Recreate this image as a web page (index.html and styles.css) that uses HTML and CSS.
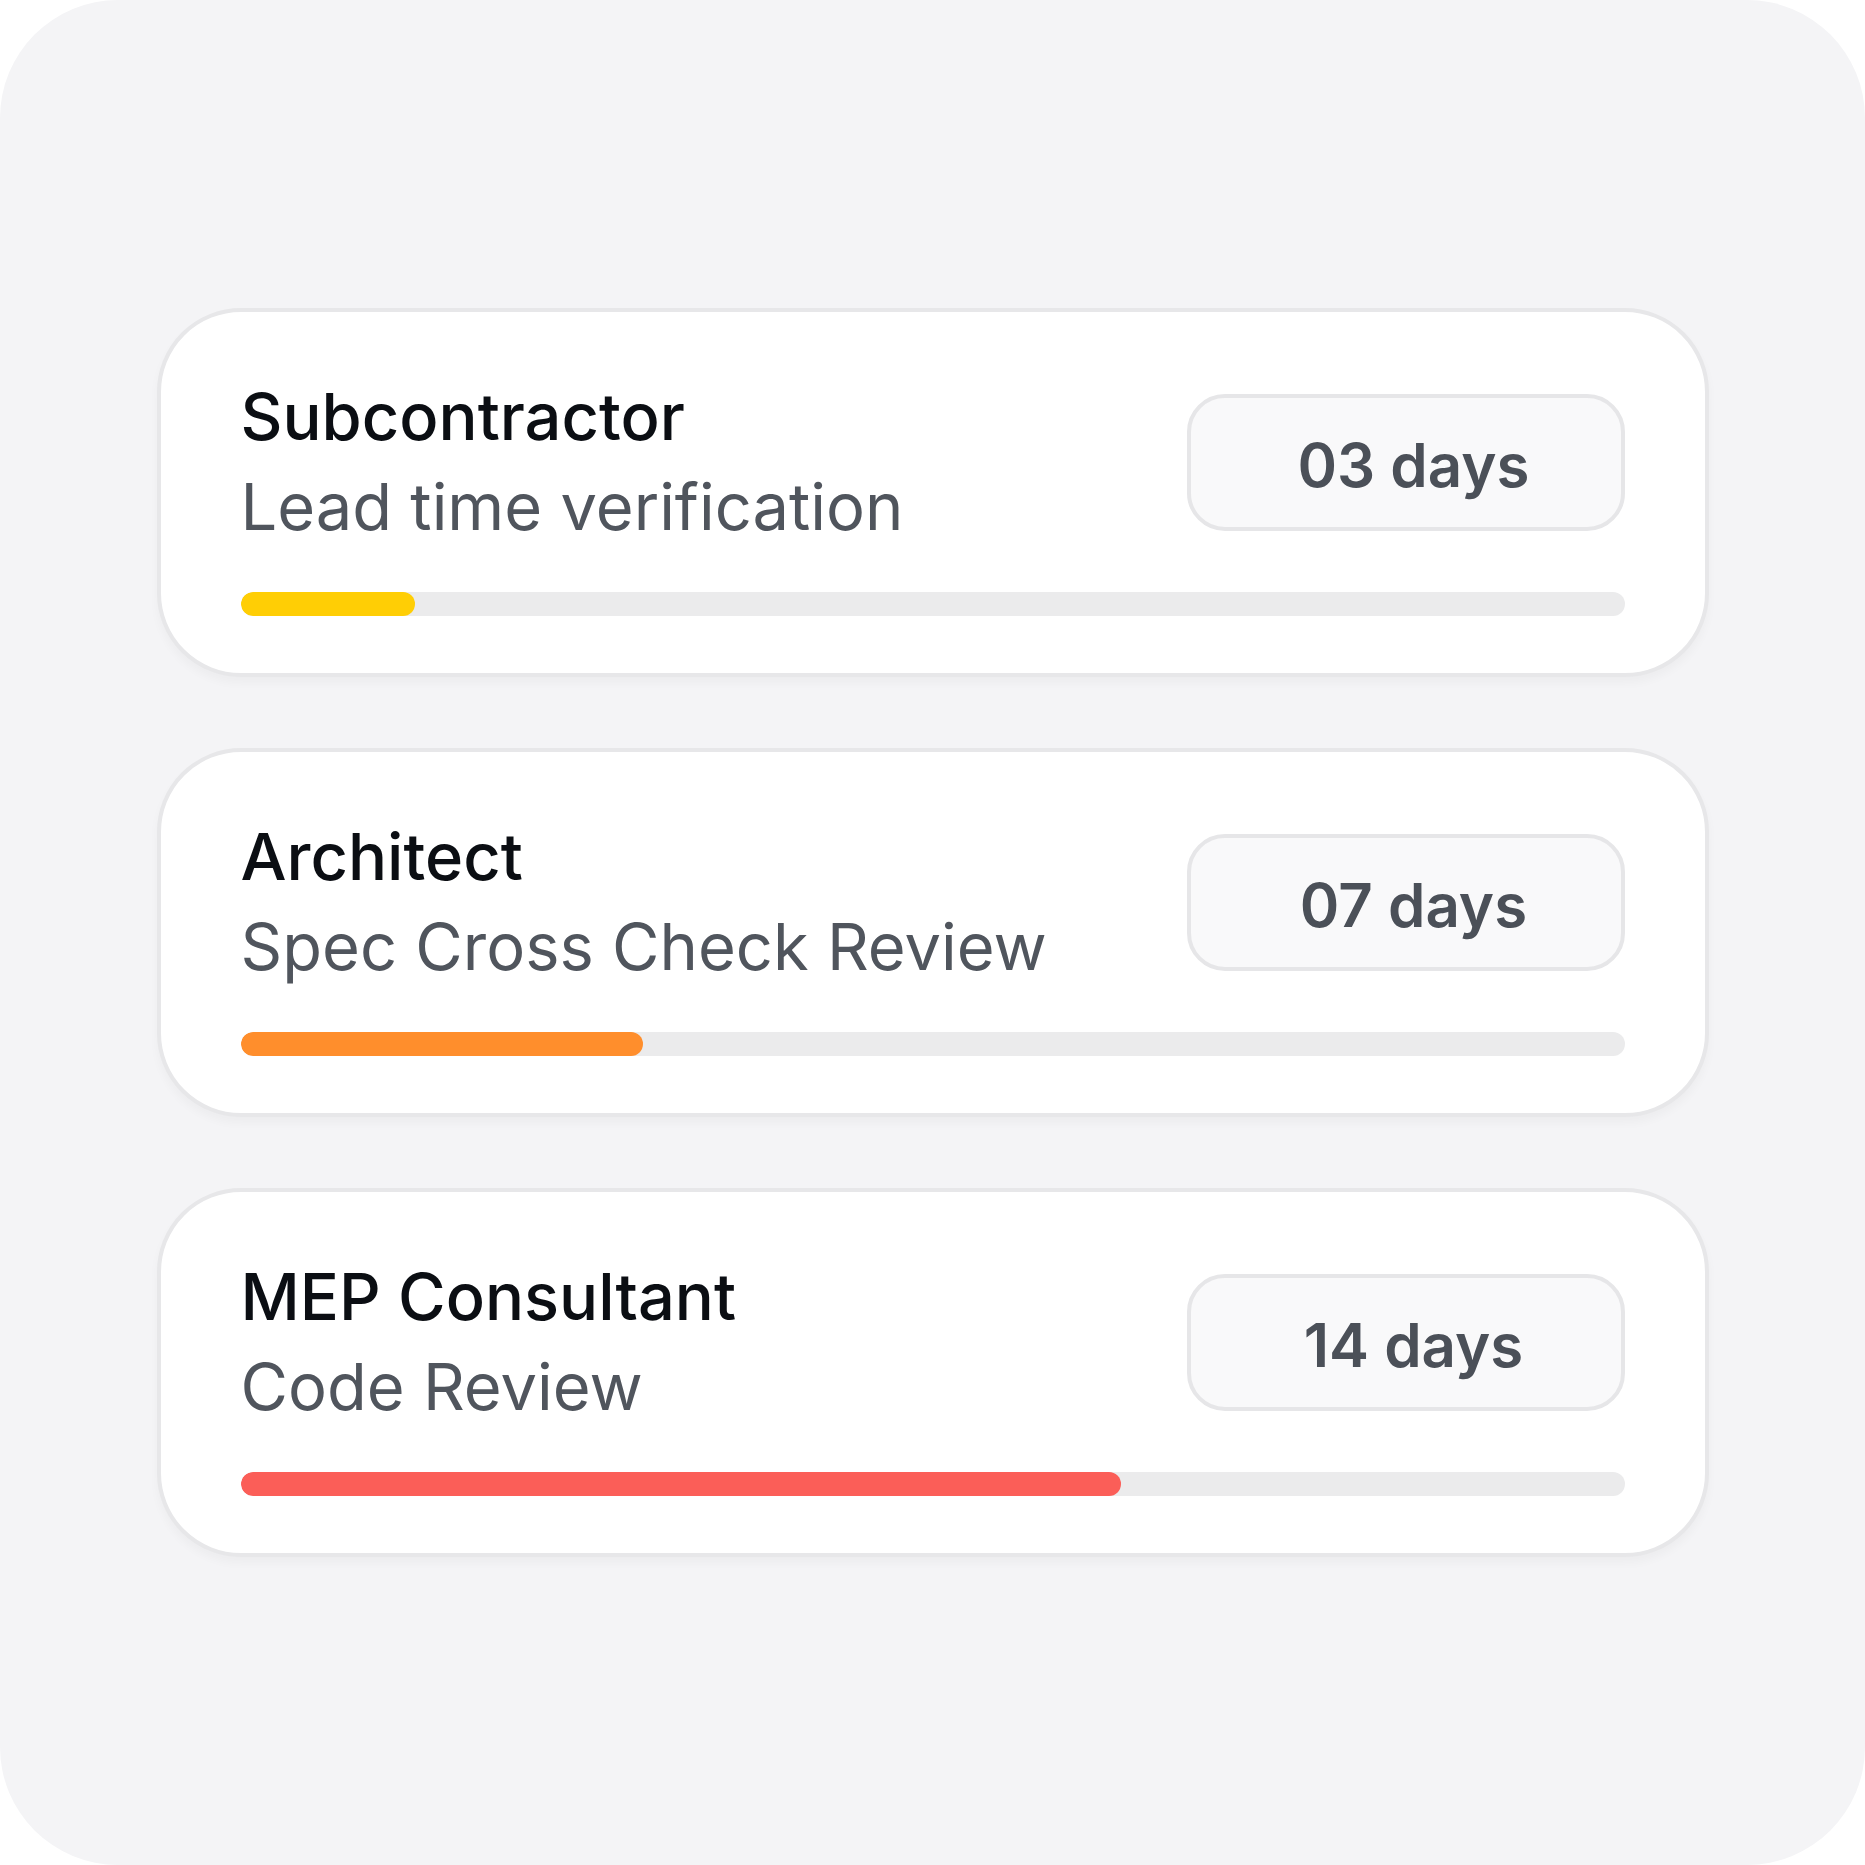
FILE: index.html
```html
<!DOCTYPE html>
<html lang="en">
<head>
  <meta charset="UTF-8">
  <meta name="viewport" content="width=device-width, initial-scale=1.0">
  <title>Review Lead Times</title>
  <link rel="stylesheet" href="styles.css">
</head>
<body>
  <div class="panel">
    <div class="card-list">

      <div class="review-card">
        <div class="card-head">
          <div class="card-text">
            <div class="card-title">Subcontractor</div>
            <div class="card-subtitle">Lead time verification</div>
          </div>
          <div class="days-badge">03 days</div>
        </div>
        <div class="progress-track">
          <div class="progress-fill fill-yellow" style="width: 12.6%"></div>
        </div>
      </div>

      <div class="review-card">
        <div class="card-head">
          <div class="card-text">
            <div class="card-title">Architect</div>
            <div class="card-subtitle">Spec Cross Check Review</div>
          </div>
          <div class="days-badge">07 days</div>
        </div>
        <div class="progress-track">
          <div class="progress-fill fill-orange" style="width: 29.1%"></div>
        </div>
      </div>

      <div class="review-card">
        <div class="card-head">
          <div class="card-text">
            <div class="card-title">MEP Consultant</div>
            <div class="card-subtitle">Code Review</div>
          </div>
          <div class="days-badge">14 days</div>
        </div>
        <div class="progress-track">
          <div class="progress-fill fill-red" style="width: 63.6%"></div>
        </div>
      </div>

    </div>
  </div>
</body>
</html>
```

FILE: styles.css
```css
* {
  box-sizing: border-box;
}

html, body {
  margin: 0;
  padding: 0;
  background-color: #fff;
}

body {
  font-family: Inter, "Noto Sans", Arial, sans-serif;
  color: #0b0e13;
}

.panel {
  width: 1865px;
  height: 1865px;
  background-color: #f4f4f6;
  border-radius: 118px;
  display: flex;
  align-items: center;
  justify-content: center;
}

.card-list {
  width: 1552px;
  display: flex;
  flex-direction: column;
  gap: 71px;
}

.review-card {
  background-color: #fff;
  border: 4px solid #e7e7e9;
  border-radius: 84px;
  padding: 60px 80px 57px;
  box-shadow: 0 6px 10px rgba(0, 0, 0, 0.03);
}

.card-head {
  display: flex;
  align-items: center;
  justify-content: space-between;
}

.card-title {
  font-size: 65px;
  font-weight: 500;
  line-height: 90px;
  color: #0b0e13;
}

.card-subtitle {
  font-size: 65px;
  font-weight: 400;
  line-height: 90px;
  color: #50555d;
}

.days-badge {
  width: 438px;
  height: 137px;
  display: flex;
  align-items: center;
  justify-content: center;
  padding: 5px 0 0 16px;
  background-color: #f9f9fa;
  border: 4px solid #e6e6e8;
  border-radius: 38px;
  font-size: 60px;
  font-weight: 600;
  color: #4b5058;
}

.progress-track {
  margin-top: 40px;
  height: 24px;
  border-radius: 12px;
  background-color: #ebebec;
  overflow: hidden;
}

.progress-fill {
  height: 100%;
  border-radius: 12px;
}

.fill-yellow {
  background-color: #ffce05;
}

.fill-orange {
  background-color: #ff8e2c;
}

.fill-red {
  background-color: #fb5e58;
}
```
